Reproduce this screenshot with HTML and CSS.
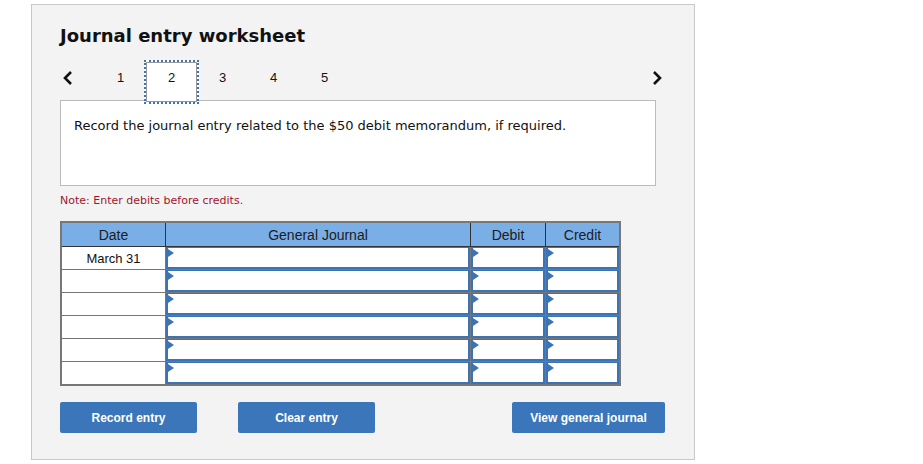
FILE: index.html
```html
<!DOCTYPE html>
<html>
<head>
<meta charset="utf-8">
<link rel="stylesheet" href="styles.css">
</head>
<body>
<div class="panel">
  <h1 class="title">Journal entry worksheet</h1>
  <div class="tabs">
    <span class="nav prev"><svg width="12" height="16" viewBox="0 0 12 16"><polyline points="9,2 3,8 9,14" fill="none" stroke="#111" stroke-width="2.6"/></svg></span>
    <span class="tab">1</span>
    <span class="tab active">2</span>
    <span class="tab">3</span>
    <span class="tab">4</span>
    <span class="tab">5</span>
    <span class="nav next"><svg width="12" height="16" viewBox="0 0 12 16"><polyline points="3,2 9,8 3,14" fill="none" stroke="#111" stroke-width="2.6"/></svg></span>
  </div>
  <div class="prompt">Record the journal entry related to the $50 debit memorandum, if required.</div>
  <p class="note">Note: Enter debits before credits.</p>
  <table class="journal">
    <thead>
      <tr><th class="c-date">Date</th><th class="c-gj">General Journal</th><th class="c-num">Debit</th><th class="c-last">Credit</th></tr>
    </thead>
    <tbody>
      <tr><td class="date">March 31</td><td class="in"><div class="box"></div></td><td class="in"><div class="box"></div></td><td class="in"><div class="box"></div></td></tr>
      <tr><td class="date"></td><td class="in"><div class="box"></div></td><td class="in"><div class="box"></div></td><td class="in"><div class="box"></div></td></tr>
      <tr><td class="date"></td><td class="in"><div class="box"></div></td><td class="in"><div class="box"></div></td><td class="in"><div class="box"></div></td></tr>
      <tr><td class="date"></td><td class="in"><div class="box"></div></td><td class="in"><div class="box"></div></td><td class="in"><div class="box"></div></td></tr>
      <tr><td class="date"></td><td class="in"><div class="box"></div></td><td class="in"><div class="box"></div></td><td class="in"><div class="box"></div></td></tr>
      <tr><td class="date"></td><td class="in"><div class="box"></div></td><td class="in"><div class="box"></div></td><td class="in"><div class="box"></div></td></tr>
    </tbody>
  </table>
  <div class="buttons">
    <button class="btn w137">Record entry</button>
    <button class="btn w137">Clear entry</button>
    <button class="btn w153 push">View general journal</button>
  </div>
</div>
</body>
</html>
```
FILE: styles.css
```css
html, body {
  margin: 0;
  padding: 0;
  background: #ffffff;
}
.panel {
  box-sizing: border-box;
  margin: 4px 0 0 31px;
  width: 664px;
  height: 456px;
  border: 1px solid #c8c8c8;
  background: #f3f3f3;
  padding: 0 0 0 28px;
  font-family: "DejaVu Sans", Verdana, sans-serif;
}
.title {
  margin: 0;
  padding-top: 20px;
  height: 35px;
  font-size: 18px;
  font-weight: bold;
  color: #111;
  line-height: 22px;
}
.tabs {
  display: flex;
  align-items: flex-start;
  height: 41px;
  position: relative;
  z-index: 2;
  margin-bottom: -1px;
  font-family: "Liberation Sans", Arial, sans-serif;
  font-size: 13px;
  color: #111;
}
.nav {
  display: flex;
  align-items: center;
  height: 36px;
}
.prev {
  width: 33px;
  padding-left: 2px;
}
.next {
  margin-left: auto;
  margin-right: 31px;
}
.tab {
  width: 51px;
  height: 36px;
  line-height: 36px;
  text-align: center;
}
.tab.active {
  box-sizing: border-box;
  width: 55px;
  height: 44px;
  margin: 0 -2px;
  border: 2px dotted #3c73b5;
  background: #ffffff;
  line-height: 32px;
  box-shadow: inset 0 0 0 1px #999;
}
.prompt {
  box-sizing: border-box;
  width: 596px;
  height: 86px;
  background: #ffffff;
  border: 1px solid #bcbcbc;
  padding: 17px 13px 13px;
  font-size: 13px;
  color: #111;
  line-height: 16px;
}
.note {
  margin: 8px 0 0 0;
  font-size: 11px;
  line-height: 14px;
  color: #a3132e;
}
.journal {
  margin-top: 13px;
  border-collapse: collapse;
  font-family: "Liberation Sans", Arial, sans-serif;
  table-layout: fixed;
}
.journal th {
  background: #7aaee6;
  color: #1c1c1c;
  font-weight: normal;
  font-size: 14px;
  height: 23px;
  padding: 0;
  border: 1px solid #333;
  border-top: 2px solid #777;
}
.journal th:first-child { border-left: 2px solid #777; }
.journal th:last-child { border-right: 2px solid #777; }
.c-date { width: 103px; }
.c-gj { width: 304px; }
.c-num { width: 74px; }
.c-last { width: 73px; }
.journal td {
  height: 22px;
  padding: 0;
  background: #ffffff;
  border: 1px solid #777;
}
.journal td.date {
  text-align: center;
  font-size: 13px;
  color: #111;
  border-left: 2px solid #777;
}
.journal tr:last-child td { border-bottom: 2px solid #777; }
.journal td.in {
  position: relative;
}
.journal td:last-child { border-right: 2px solid #777; }
.box {
  position: absolute;
  inset: 0;
  border: 2px solid #3c73b5;
  border-top-width: 1px;
}
.box::before {
  content: "";
  position: absolute;
  left: 0;
  top: 1px;
  border-left: 6px solid #3c73b5;
  border-top: 4px solid transparent;
  border-bottom: 4px solid transparent;
}
.buttons {
  display: flex;
  margin-top: 16px;
}
.btn {
  height: 31px;
  border: none;
  border-radius: 2px;
  background: #3a76b9;
  color: #ffffff;
  font-family: "Liberation Sans", Arial, sans-serif;
  font-weight: bold;
  font-size: 12px;
  padding: 0;
  margin-right: 41px;
}
.w137 { width: 137px; }
.w153 { width: 153px; }
.push { margin-left: 96px; margin-right: 0; }
```
